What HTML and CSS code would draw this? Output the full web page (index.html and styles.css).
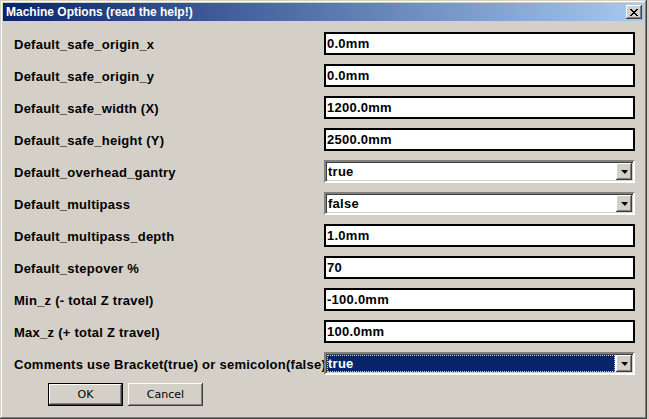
FILE: index.html
```html
<!DOCTYPE html>
<html>
<head>
<meta charset="utf-8">
<link rel="stylesheet" href="styles.css">
</head>
<body>
<div class="window">
  <div class="titlebar">
    <span class="title">Machine Options (read the help!)</span>
    <span class="close"><svg width="8" height="7" viewBox="0 0 8 7"><path d="M0 0h2v1h1v1h2v-1h1v-1h2v1h-1v1h-1v1h-1v1h1v1h1v1h1v1h-2v-1h-1v-1h-2v1h-1v1h-2v-1h1v-1h1v-1h1v-1h-1v-1h-1v-1h-1z" fill="#000"/></svg></span>
  </div>
  <div class="form">
    <label class="lbl">Default_safe_origin_x</label><div class="txt">0.0mm</div>
    <label class="lbl">Default_safe_origin_y</label><div class="txt">0.0mm</div>
    <label class="lbl">Default_safe_width (X)</label><div class="txt">1200.0mm</div>
    <label class="lbl">Default_safe_height (Y)</label><div class="txt">2500.0mm</div>
    <label class="lbl">Default_overhead_gantry</label>
    <div class="sel"><span class="val">true</span><span class="drop"><i class="arrow"></i></span></div>
    <label class="lbl">Default_multipass</label>
    <div class="sel"><span class="val">false</span><span class="drop"><i class="arrow"></i></span></div>
    <label class="lbl">Default_multipass_depth</label><div class="txt">1.0mm</div>
    <label class="lbl">Default_stepover %</label><div class="txt">70</div>
    <label class="lbl">Min_z (- total Z travel)</label><div class="txt">-100.0mm</div>
    <label class="lbl">Max_z (+ total Z travel)</label><div class="txt">100.0mm</div>
    <label class="lbl">Comments use Bracket(true) or semicolon(false)</label>
    <div class="sel"><span class="val focus">true</span><span class="drop"><i class="arrow"></i></span></div>
  </div>
  <div class="buttons">
    <div class="btn default"><span>OK</span></div>
    <div class="btn"><span>Cancel</span></div>
  </div>
</div>
</body>
</html>
```

FILE: styles.css
```css
* { box-sizing: border-box; }
html, body { margin: 0; padding: 0; }
body {
  width: 649px;
  height: 419px;
  background: #d4d0c8;
  overflow: hidden;
  font-family: "Liberation Sans", Arial, sans-serif;
}
.window {
  width: 647px;
  height: 419px;
  background: #d4d0c8;
  padding: 3px;
  box-shadow: inset -1px -1px #404040, inset 1px 1px #d4d0c8, inset -2px -2px #808080, inset 2px 2px #ffffff;
}
.titlebar {
  height: 18px;
  background: linear-gradient(to right, #0a246a, #a6caf0);
  display: flex;
  align-items: center;
  justify-content: space-between;
  padding: 0 2px 0 3px;
}
.title {
  color: #fff;
  font-weight: bold;
  font-family: "Liberation Sans", Arial, sans-serif;
  font-size: 12px;
}
.close {
  width: 16px;
  height: 14px;
  background: #d4d0c8;
  box-shadow: inset -1px -1px #404040, inset 1px 1px #ffffff, inset -2px -2px #808080;
  display: flex;
  align-items: center;
  justify-content: center;
  padding-right: 1px;
}
.close svg { display: block; }
.form {
  display: grid;
  grid-template-columns: 310px 311px;
  grid-auto-rows: 23px;
  row-gap: 9px;
  padding: 11px 0 0 11px;
}
.lbl {
  font-weight: bold;
  font-size: 13px;
  color: #000;
  display: flex;
  align-items: center;
  white-space: nowrap;
  letter-spacing: 0.25px;
  padding-top: 1px;
}
.txt {
  background: #fff;
  border: 2px solid #000;
  font-weight: bold;
  font-size: 13px;
  letter-spacing: 0.25px;
  display: flex;
  align-items: center;
  padding-left: 1px;
}
.sel {
  background: #fff;
  border-style: solid;
  border-width: 2px;
  border-color: #808080 #ffffff #ffffff #808080;
  box-shadow: inset 1px 1px #404040, inset -1px -1px #d4d0c8;
  display: flex;
  padding: 1px;
  height: 23px;
}
.val {
  flex: 1;
  font-weight: bold;
  font-size: 13px;
  letter-spacing: 0.25px;
  display: flex;
  align-items: center;
  padding-left: 1px;
}
.val.focus {
  background: #0a246a;
  color: #fff;
  outline: 1px dotted #e8d890;
  outline-offset: -1px;
  margin: 0 1px 0 0;
}
.drop {
  width: 16px;
  background: #d4d0c8;
  box-shadow: inset -1px -1px #404040, inset 1px 1px #ffffff, inset -2px -2px #808080;
  display: flex;
  align-items: center;
  justify-content: center;
}
.arrow {
  width: 0;
  height: 0;
  border-left: 4px solid transparent;
  border-right: 3px solid transparent;
  border-top: 4px solid #000;
}
.buttons {
  display: flex;
  gap: 5px;
  padding: 8px 0 0 45px;
}
.btn {
  width: 75px;
  height: 23px;
  background: #d4d0c8;
  box-shadow: inset -1px -1px #404040, inset 1px 1px #ffffff, inset -2px -2px #808080;
  display: flex;
  align-items: center;
  justify-content: center;
  font-family: "DejaVu Sans", Tahoma, sans-serif;
  font-size: 11px;
  color: #000;
}
.btn.default {
  border: 1px solid #000;
}
```
